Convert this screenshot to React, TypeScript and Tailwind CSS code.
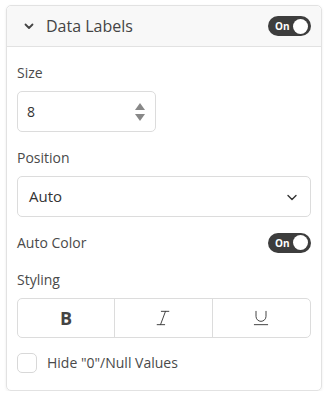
import { useState } from "react";
import { Italic, Underline } from "lucide-react";

const Toggle = ({ on, onClick }: { on: boolean; onClick: () => void }) => (
    <button
        type="button"
        onClick={onClick}
        className="flex h-[20px] w-[43px] items-center justify-between rounded-full bg-[#3d3d3d] pl-[7px] pr-[3px]"
    >
        <span className="text-[10px] font-bold leading-none text-white">{on ? "On" : "Off"}</span>
        <span className="h-[15px] w-[15px] rounded-full bg-white" />
    </button>
);

const App = () => {
    const [labelsOn, setLabelsOn] = useState(true);
    const [autoColor, setAutoColor] = useState(true);
    const [hideNull, setHideNull] = useState(false);

    return (
        <div className="bg-white pl-[6px] pr-[7px] pt-[5px] font-['Open_Sans',sans-serif] text-[#4a4a4a]">
            <div className="rounded-[5px] border border-[#e2e2e2] shadow-[0_1px_3px_rgba(0,0,0,0.08)]">
                <div className="flex h-[41px] items-center justify-between rounded-t-[5px] border-b border-[#e2e2e2] bg-[#f8f8f8] pl-[16px] pr-[10px]">
                    <div className="flex items-center gap-[11px]">
                        <svg width="12" height="12" viewBox="0 0 12 12" fill="none">
                            <path d="M2.5 4.5 6 8 9.5 4.5" stroke="#444" strokeWidth="1.8" strokeLinecap="round" strokeLinejoin="round" />
                        </svg>
                        <span className="text-[16px] text-[#444]">Data Labels</span>
                    </div>
                    <Toggle on={labelsOn} onClick={() => setLabelsOn(!labelsOn)} />
                </div>

                <div className="px-[10px] pb-[17px] pt-[15px]">
                    <div className="text-[14px]">Size</div>
                    <div className="mt-[8px] flex h-[41px] w-[139px] items-center justify-between rounded-[5px] border border-[#dcdcdc] pl-[9px] pr-[9px]">
                        <span className="text-[14px] text-[#333]">8</span>
                        <svg width="12" height="20" viewBox="0 0 12 20">
                            <path d="M6 1 11 8H1Z" fill="#888" />
                            <path d="M6 19 11 12H1Z" fill="#888" />
                        </svg>
                    </div>

                    <div className="mt-[15px] text-[14px]">Position</div>
                    <div className="mt-[8px] flex h-[41px] items-center justify-between rounded-[5px] border border-[#dcdcdc] pl-[11px] pr-[12px]">
                        <span className="text-[15px] text-[#333]">Auto</span>
                        <svg width="12" height="12" viewBox="0 0 12 12" fill="none">
                            <path d="M2 4.5 6 8.5 10 4.5" stroke="#333" strokeWidth="1.4" strokeLinecap="round" strokeLinejoin="round" />
                        </svg>
                    </div>

                    <div className="mt-[15px] flex items-center justify-between">
                        <span className="text-[14px]">Auto Color</span>
                        <Toggle on={autoColor} onClick={() => setAutoColor(!autoColor)} />
                    </div>

                    <div className="mt-[16px] text-[14px]">Styling</div>
                    <div className="mt-[8px] grid h-[40px] grid-cols-3 rounded-[5px] border border-[#dcdcdc]">
                        <button type="button" className="flex items-center justify-center border-r border-[#dcdcdc] text-[18px] font-bold text-[#444]">B</button>
                        <button type="button" className="flex items-center justify-center border-r border-[#dcdcdc] text-[#444]">
                            <Italic size={20} strokeWidth={1.2} />
                        </button>
                        <button type="button" className="flex items-center justify-center text-[#444]">
                            <Underline size={20} strokeWidth={1.2} />
                        </button>
                    </div>

                    <label className="mt-[14px] flex items-center gap-[10px]">
                        <input
                            type="checkbox"
                            checked={hideNull}
                            onChange={() => setHideNull(!hideNull)}
                            className="h-[20px] w-[20px] appearance-none rounded-[5px] border border-[#d8d8d8]"
                        />
                        <span className="text-[14px]">Hide "0"/Null Values</span>
                    </label>
                </div>
            </div>
        </div>
    );
};

export default App;
